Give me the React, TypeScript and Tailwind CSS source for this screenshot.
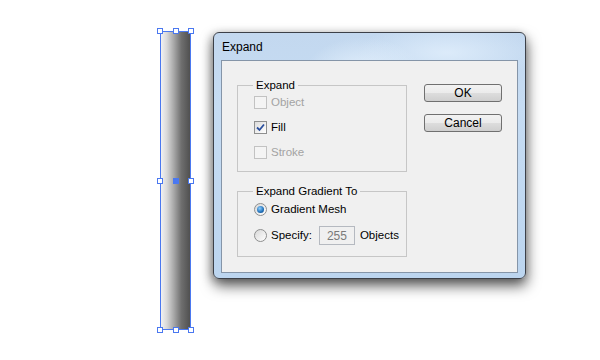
import React from "react";

const ui = { fontFamily: '"Liberation Sans", Arial, sans-serif' };

const Handle = ({ fill }: { fill?: boolean }) => (
  <div
    className={`w-[6px] h-[6px] border border-[#4a78f0] ${fill ? "bg-[#4a78f0]" : "bg-white"}`}
  />
);

const Checkbox = ({ checked, disabled }: { checked?: boolean; disabled?: boolean }) => (
  <div
    className={`w-[13px] h-[13px] border flex items-center justify-center ${
      disabled
        ? "border-[#c2c2c2] bg-[#f4f4f4]"
        : "border-[#8e8f8f] bg-[linear-gradient(135deg,#dcdcdc,#ffffff)]"
    }`}
  >
    {checked && (
      <svg width="9" height="9" viewBox="0 0 9 9">
        <path d="M1 4.5 L3.5 7 L8 1.5" fill="none" stroke="#2a4f9e" strokeWidth="1.8" />
      </svg>
    )}
  </div>
);

const Radio = ({ selected }: { selected?: boolean }) => (
  <div className="w-[13px] h-[13px] rounded-full border border-[#8e8f8f] bg-[linear-gradient(135deg,#d8d8d8,#ffffff)] flex items-center justify-center">
    {selected && (
      <div className="w-[7px] h-[7px] rounded-full bg-[radial-gradient(circle_at_40%_35%,#8fd0ff,#1f6fb8_60%,#0e3f77)]" />
    )}
  </div>
);

const Button = ({ label }: { label: string }) => (
  <div className="w-[78px] h-[18px] rounded-[3px] border border-[#707070] bg-[linear-gradient(#f2f2f2_0%,#ebebeb_50%,#dddddd_51%,#cfcfcf_100%)] flex items-center justify-center text-[12px] text-black">
    {label}
  </div>
);

const Group = ({
  title,
  height,
  children,
}: {
  title: string;
  height: string;
  children: React.ReactNode;
}) => (
  <fieldset className={`w-[170px] ${height} border border-[#c6c6c6] pl-[16px]`}>
    <legend className="ml-[-1px] px-[3px] text-[11.5px] leading-[14px] text-black">{title}</legend>
    {children}
  </fieldset>
);

export default function App() {
  return (
    <div className="relative w-[600px] h-[360px] bg-white overflow-hidden" style={ui}>
      {/* gradient object with selection */}
      <div className="absolute left-[160px] top-[31px] w-[31px] h-[299px]">
        <div className="absolute inset-0 border border-[#4a78f0] bg-[linear-gradient(to_right,#f2f2f2_0%,#d9d9d9_20%,#a6a6a6_45%,#6f6f6f_70%,#505050_100%)]" />
        <div className="absolute inset-0 flex flex-col justify-between">
          {[0, 1, 2].map((r) => (
            <div key={r} className="flex justify-between -mx-[3px] -my-[3px]">
              <Handle />
              <Handle fill={r === 1} />
              <Handle />
            </div>
          ))}
        </div>
      </div>

      {/* dialog window */}
      <div className="absolute left-[213px] top-[32px] w-[313px] h-[247px] rounded-[6px] border border-[#3c4048] shadow-[1px_7px_14px_rgba(0,0,0,0.6),-2px_2px_8px_rgba(0,0,0,0.25)] bg-[radial-gradient(ellipse_60px_40px_at_48%_18%,#e6f2fd,transparent),radial-gradient(ellipse_90px_30px_at_75%_8%,#dcebfa,transparent),linear-gradient(#c3d8ef,#c6dcf3_30%,#bcd5ef)] flex flex-col px-[7px] pb-[5px]">
        <div className="h-[27px] flex items-center pl-[1px] text-[12px] text-black pt-[1px]">
          Expand
        </div>
        <div className="flex-1 border border-[#8595a8] bg-[#f0f0f0] flex pl-[15px] pt-[17px] gap-[17px]">
          <div className="flex flex-col gap-[12px]">
            <Group title="Expand" height="h-[94px]">
              <div className="flex flex-col gap-[12px] pt-[4px]">
                <div className="flex items-center gap-[4px] text-[11.5px] leading-[13px] text-[#a3a3a3]">
                  <Checkbox disabled />
                  Object
                </div>
                <div className="flex items-center gap-[4px] text-[11.5px] leading-[13px] text-black">
                  <Checkbox checked />
                  Fill
                </div>
                <div className="flex items-center gap-[4px] text-[11.5px] leading-[13px] text-[#a3a3a3]">
                  <Checkbox disabled />
                  Stroke
                </div>
              </div>
            </Group>
            <Group title="Expand Gradient To" height="h-[73px]">
              <div className="flex flex-col pt-[5px]">
                <div className="flex items-center gap-[4px] text-[11.5px] leading-[13px] text-black">
                  <Radio selected />
                  Gradient Mesh
                </div>
                <div className="flex items-center gap-[4px] text-[11.5px] text-black mt-[10px]">
                  <Radio />
                  <span>Specify:</span>
                  <div className="ml-[3px] w-[36px] h-[19px] border border-[#b5b9c0] bg-[#f0f0f0] flex items-center justify-center text-[#7a7a7a] text-[12px]">
                    255
                  </div>
                  <span className="ml-[1px]">Objects</span>
                </div>
              </div>
            </Group>
          </div>
          <div className="flex flex-col gap-[12px] pt-[6px]">
            <Button label="OK" />
            <Button label="Cancel" />
          </div>
        </div>
      </div>
    </div>
  );
}
